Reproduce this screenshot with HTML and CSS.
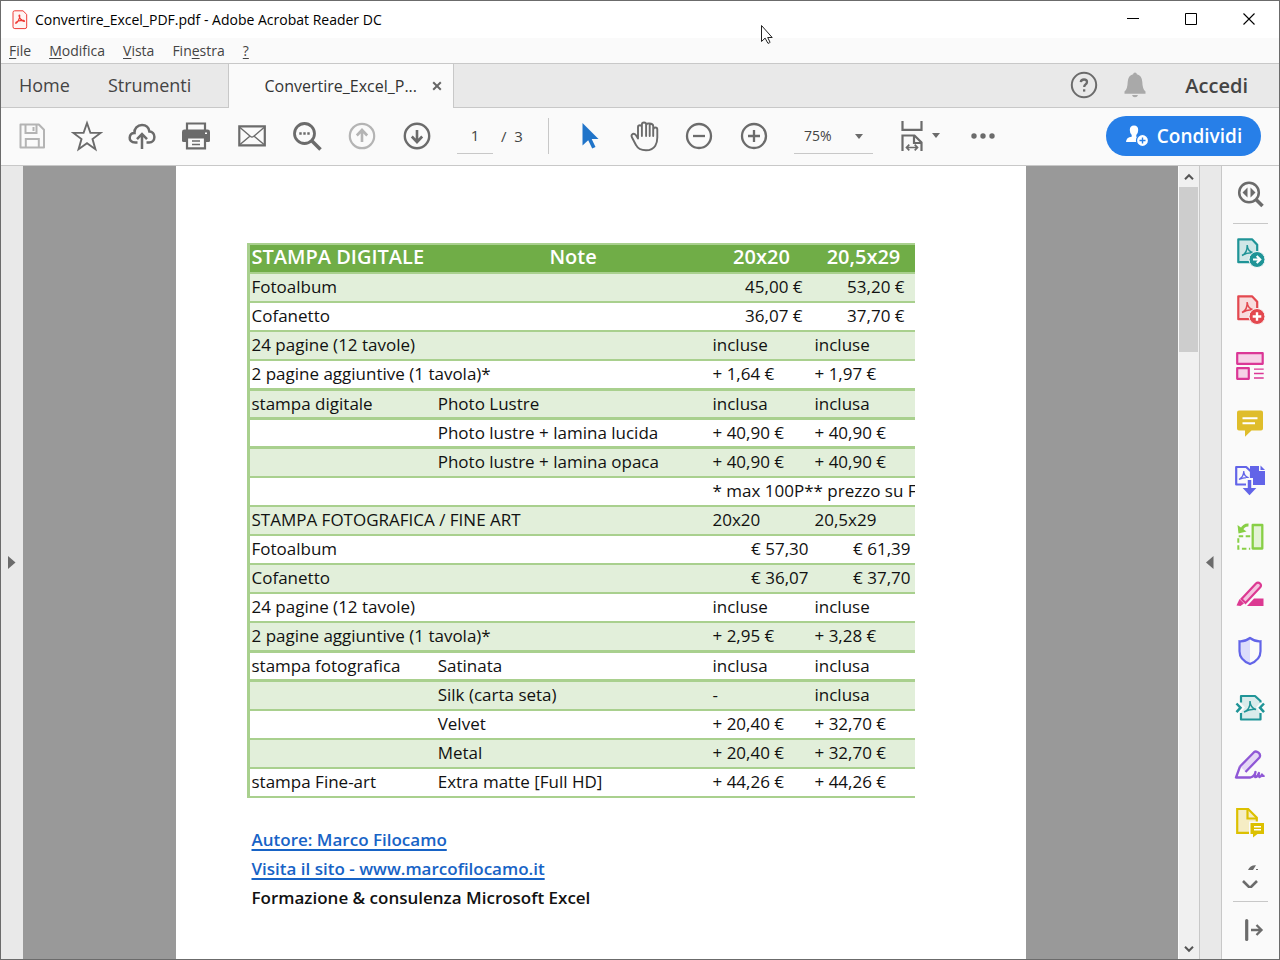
FILE: index.html
```html
<!DOCTYPE html>
<html lang="it">
<head>
<meta charset="utf-8">
<meta name="viewport" content="width=device-width, initial-scale=1">
<title>Convertire_Excel_PDF.pdf - Adobe Acrobat Reader DC</title>
<link rel="stylesheet" href="styles.css">
</head>
<body>
<div class="window">
  <header class="titlebar">
    <svg class="app-icon" width="16" height="20" viewBox="0 0 16 20" fill="none" stroke="#ee3a35"><path d="M1 2.5Q1 .8 2.7.8H11l3.7 3.6v12.4q0 1.8-1.8 1.8H2.800Q1 18.600 1 16.800Z" fill="#fff5f4"/><path d="M3.800 13.300C5 13.600 8.500 7.500 7.700 5.200 6.600 4 6.600 8 10 10.600c2.800 1.900 3.200.2 1.500-.2-2.500-.5-8.300 1-7.700 2.900Z" stroke-width="1.200"/></svg>
    <h1 class="title">Convertire_Excel_PDF.pdf - Adobe Acrobat Reader DC</h1>
    <div class="window-controls">
      <button class="control" aria-label="Riduci a icona"><svg width="14" height="14" viewBox="0 0 14 14"><path d="M1 6.500h12" stroke="#000"/></svg></button>
      <button class="control" aria-label="Ingrandisci"><svg width="14" height="14" viewBox="0 0 14 14"><path d="M1.500 1.500h11v11h-11z" fill="none" stroke="#000"/></svg></button>
      <button class="control" aria-label="Chiudi"><svg width="14" height="14" viewBox="0 0 14 14"><path d="M1.500 1.500l11 11m0-11l-11 11" stroke="#000" stroke-width="1.100"/></svg></button>
    </div>
  </header>
  <nav class="menubar">
    <button class="menu"><u>F</u>ile</button>
    <button class="menu"><u>M</u>odifica</button>
    <button class="menu"><u>V</u>ista</button>
    <button class="menu">Fin<u>e</u>stra</button>
    <button class="menu"><u>?</u></button>
  </nav>
  <div class="tabs">
    <div class="tabs-home">
      <button class="tab-link">Home</button>
      <button class="tab-link">Strumenti</button>
    </div>
    <div class="tab-active">
      <span>Convertire_Excel_P...</span>
      <button class="tab-close" aria-label="Chiudi scheda"><svg width="10" height="10" viewBox="0 0 10 10"><path d="M1.200 1.200l7.600 7.600m0-7.600L1.200 8.800" stroke="#666" stroke-width="2"/></svg></button>
    </div>
    <div class="tabs-end">
      <button class="icon-button" aria-label="Guida"><svg width="28" height="28" viewBox="0 0 28 28" fill="none" stroke="#6b6b6b"><circle cx="14" cy="14" r="12.200" stroke-width="2"/><path d="M10.800 11.200q.2-2.700 3.200-2.700 3 0 3 2.500 0 1.500-1.500 2.400-1.300.8-1.300 2.600" stroke-width="2.300"/><path d="M13 18.300h2.300v2.300H13z" fill="#6b6b6b" stroke="none"/></svg></button>
      <button class="icon-button" aria-label="Notifiche"><svg width="24" height="26" viewBox="0 0 24 26" fill="#a9a9a9"><path d="M12 .5q1.700 0 1.900 1.700Q19 3.500 19.300 10q.2 7.500 3.200 9.500v2.200h-21v-2.200q3-2 3.200-9.500Q5 3.500 10.100 2.200 10.300.5 12 .5ZM9 22.900h6q-.6 2.400-3 2.400T9 22.900Z"/></svg></button>
      <button class="sign-in">Accedi</button>
    </div>
  </div>
  <div class="toolbar">
    <div class="tool-group">
      <button class="tool" aria-label="Salva"><svg width="32" height="32" viewBox="0 0 32 32" fill="none" stroke="#b4b4b4" stroke-width="2"><path d="M4.500 4.500h18.300L28 9.800v17.700H4.500Z" stroke-linejoin="round"/><path d="M9.500 5v8h11V5M9.800 27v-8h13v8"/><path d="M17.500 7v4" /></svg></button>
      <button class="tool" aria-label="Preferiti"><svg width="32" height="32" viewBox="0 0 32 32" fill="none" stroke="#6b6b6b" stroke-width="1.900"><path d="M16 3l3.400 9.700 10.200.2-8.100 6.200 2.900 10.100L16 23.200l-8.400 6 2.900-10.100-8.100-6.200 10.200-.2Z"/></svg></button>
      <button class="tool" aria-label="Carica nel cloud"><svg width="32" height="32" viewBox="0 0 32 32" fill="none" stroke="#6b6b6b" stroke-width="2.500"><path d="M11.500 22.500H9.300C5 22.500 3.500 20 3.700 17.500c.2-2.500 2-4.500 4.800-4.500C8 8.500 11.500 5 16 5s6.800 2.900 7.400 6.500c3 .2 5 2.500 5 5.500s-2.100 5.500-5.200 5.500h-2.700"/><path d="M16 29V14m-5 5.200l5-5.200 5 5.200"/></svg></button>
      <button class="tool" aria-label="Stampa"><svg width="32" height="32" viewBox="0 0 32 32"><path d="M6 11V3.500h18V11" fill="none" stroke="#6b6b6b" stroke-width="2.200"/><path d="M3.500 9.500h23q2.500 0 2.500 2.300v9q0 1.200-1.500 1.200H2.500Q1 22 1 20.800v-9Q1 9.500 3.500 9.500Z" fill="#6b6b6b"/><path d="M6 17.500h18v10.800H6Z" fill="#fafafa" stroke="#6b6b6b" stroke-width="2.200"/><path d="M11 21h8m-8 3.500h8" stroke="#6b6b6b" stroke-width="1.300"/><path d="M24 13.200h2" stroke="#fff" stroke-width="1.600"/></svg></button>
      <button class="tool" aria-label="Invia per e-mail"><svg width="32" height="32" viewBox="0 0 32 32" fill="none" stroke="#6b6b6b"><path d="M3.300 6.300h25.500v19H3.300Z" stroke-width="2.200"/><path d="M4 7.500l10.500 9q1.500 1 3 0l10.500-9M4 24.500l9.500-8m5 0l9.500 8" stroke-width="1.400"/></svg></button>
      <button class="tool" aria-label="Cerca"><svg width="32" height="32" viewBox="0 0 32 32" fill="none" stroke="#6b6b6b"><circle cx="13.500" cy="13.500" r="10" stroke-width="2.800"/><path d="M21 21l8.500 8.500" stroke-width="3.500"/><path d="M8.300 13.500h2.400m1.600 0h2.400m1.600 0h2.400" stroke-width="2.400"/></svg></button>
      <button class="tool" aria-label="Pagina precedente"><svg width="32" height="32" viewBox="0 0 32 32" fill="none" stroke="#b4b4b4"><circle cx="16" cy="16" r="12.200" stroke-width="2.200"/><path d="M16 22V10m-5.200 5.500L16 10l5.200 5.500" stroke-width="2.600"/></svg></button>
      <button class="tool" aria-label="Pagina successiva"><svg width="32" height="32" viewBox="0 0 32 32" fill="none" stroke="#6b6b6b"><circle cx="16" cy="16" r="12.200" stroke-width="2.400"/><path d="M16 10v12m-5.200-5.500L16 22l5.200-5.500" stroke-width="2.600"/></svg></button>
    </div>
    <div class="page-number">
      <input class="page-input" type="text" value="1" aria-label="Pagina"><span>/&nbsp; 3</span>
    </div>
    <div class="tool-group tool-group-view">
      <button class="tool" aria-label="Selezione"><svg width="32" height="32" viewBox="0 0 32 32"><path d="M9.500 3v22.500l5.700-5.200 4 8.200 3.300-1.600-3.800-7.900h6.800Z" fill="#2074c9"/></svg></button>
      <button class="tool" aria-label="Mano"><svg width="32" height="32" viewBox="0 0 32 32" fill="none" stroke="#6b6b6b" stroke-width="1.900" stroke-linecap="round" stroke-linejoin="round"><path d="M10 18.500L8 15.300Q6.500 13.300 4.700 14q-1.800.9-.8 3.200l4.200 8Q10.600 30.300 18 30.300q6.500 0 9.300-4.600 2-3.300 2-8.200V9.600Q29.300 7.500 27.400 7.500T25.200 9.600V16M10 18.500V7.200Q10 5.300 11.900 5.300T13.900 7.200V16m0-8.800V4.600Q13.900 2.500 16 2.500t2.100 2.100V16M18.100 5.500Q18.300 3.500 20.100 3.500h1.300Q25.200 3.600 25.200 6v10M21.700 5v11"/></svg></button>
      <button class="tool" aria-label="Riduci"><svg width="32" height="32" viewBox="0 0 32 32" fill="none" stroke="#6b6b6b" stroke-width="2.300"><circle cx="16" cy="16" r="12"/><path d="M10 16h12"/></svg></button>
      <button class="tool" aria-label="Ingrandisci pagina"><svg width="32" height="32" viewBox="0 0 32 32" fill="none" stroke="#6b6b6b" stroke-width="2.300"><circle cx="16" cy="16" r="12"/><path d="M10 16h12M16 10v12"/></svg></button>
    </div>
    <div class="zoom">
      <select class="zoom-select" aria-label="Zoom"><option>75%</option></select>
      <svg class="zoom-arrow" width="8" height="5" viewBox="0 0 8 5"><path d="M0 0h8L4 5z" fill="#6b6b6b"/></svg>
    </div>
    <button class="fit" aria-label="Adatta alla larghezza"><svg width="24" height="32" viewBox="0 0 24 32" fill="none" stroke="#6b6b6b" stroke-width="2.200"><path d="M2.500 1v8.800h19V1"/><path d="M2.500 31V15.500h12l7 7V31M14 15.500v7.500h7.500"/><path d="M6.500 27.500h11M9.300 24.700l-2.800 2.800 2.800 2.800m5.400-5.600l2.800 2.800-2.800 2.800" stroke-width="1.700"/></svg><svg width="8" height="5" viewBox="0 0 8 5"><path d="M0 0h8L4 5z" fill="#6b6b6b"/></svg></button>
    <button class="more" aria-label="Altri strumenti"><svg width="24" height="6" viewBox="0 0 24 6" fill="#6b6b6b"><circle cx="3" cy="3" r="2.700"/><circle cx="12" cy="3" r="2.700"/><circle cx="21" cy="3" r="2.700"/></svg></button>
    <button class="share"><svg width="24" height="24" viewBox="0 0 24 24"><path d="M9 1.500q4.200 0 4.200 4.500 0 3-1.900 5.100v1.600q5.700 1.800 6.200 5.300H1q.2-4.800 5.700-5.300v-1.600Q4.800 9 4.800 6 4.800 1.500 9 1.500Z" fill="#fff"/><circle cx="17.500" cy="16.500" r="6" fill="#fff" stroke="#277fe8" stroke-width="1.200"/><path d="M14.500 16.500h6m-3-3v6" stroke="#277fe8" stroke-width="1.400"/></svg>Condividi</button>
  </div>

  <div class="content">
    <button class="rail rail-left" aria-label="Mostra riquadro di navigazione"><svg width="8" height="14" viewBox="0 0 8 14"><path d="M0 0l7.500 6.500L0 13z" fill="#6b6b6b"/></svg></button>
    <main class="viewer">
      <article class="page">
        <table class="prices">
          <colgroup><col class="col-item"><col class="col-note"><col class="col-price"><col class="col-price"></colgroup>
          <thead><tr><th class="left" scope="col">STAMPA DIGITALE</th><th scope="col">Note</th><th scope="col">20x20</th><th scope="col">20,5x29</th></tr></thead>
          <tbody>
            <tr><td colspan="2">Fotoalbum</td><td class="amount">45,00 €</td><td class="amount">53,20 €</td></tr>
            <tr><td colspan="2">Cofanetto</td><td class="amount">36,07 €</td><td class="amount">37,70 €</td></tr>
            <tr><td colspan="2">24 pagine (12 tavole)</td><td>incluse</td><td>incluse</td></tr>
            <tr class="thick tall"><td colspan="2">2 pagine aggiuntive (1 tavola)*</td><td>+ 1,64 €</td><td>+ 1,97 €</td></tr>
            <tr class="thick"><td>stampa digitale</td><td>Photo Lustre</td><td>inclusa</td><td>inclusa</td></tr>
            <tr class="thick"><td></td><td>Photo lustre + lamina lucida</td><td>+ 40,90 €</td><td>+ 40,90 €</td></tr>
            <tr><td></td><td>Photo lustre + lamina opaca</td><td>+ 40,90 €</td><td>+ 40,90 €</td></tr>
            <tr><td colspan="2"></td><td colspan="2">* max 100P** prezzo su F</td></tr>
            <tr><td colspan="2">STAMPA FOTOGRAFICA / FINE ART</td><td>20x20</td><td>20,5x29</td></tr>
            <tr><td colspan="2">Fotoalbum</td><td class="euro">€ 57,30</td><td class="euro">€ 61,39</td></tr>
            <tr><td colspan="2">Cofanetto</td><td class="euro">€ 36,07</td><td class="euro">€ 37,70</td></tr>
            <tr><td colspan="2">24 pagine (12 tavole)</td><td>incluse</td><td>incluse</td></tr>
            <tr class="thick tall"><td colspan="2">2 pagine aggiuntive (1 tavola)*</td><td>+ 2,95 €</td><td>+ 3,28 €</td></tr>
            <tr class="thick"><td>stampa fotografica</td><td>Satinata</td><td>inclusa</td><td>inclusa</td></tr>
            <tr><td></td><td>Silk (carta seta)</td><td>-</td><td>inclusa</td></tr>
            <tr><td></td><td>Velvet</td><td>+ 20,40 €</td><td>+ 32,70 €</td></tr>
            <tr><td></td><td>Metal</td><td>+ 20,40 €</td><td>+ 32,70 €</td></tr>
            <tr><td>stampa Fine-art</td><td>Extra matte [Full HD]</td><td>+ 44,26 €</td><td>+ 44,26 €</td></tr>
          </tbody>
        </table>
        <footer class="credits">
          <a href="#autore">Autore: Marco Filocamo</a>
          <a href="#sito">Visita il sito - www.marcofilocamo.it</a>
          <span>Formazione &amp; consulenza Microsoft Excel</span>
        </footer>
      </article>
    </main>
    <div class="scrollbar">
      <button class="scroll-button" aria-label="Scorri su"><svg width="10" height="8" viewBox="0 0 10 8"><path d="M1 6.200l4-4 4 4" fill="none" stroke="#555" stroke-width="2"/></svg></button>
      <div class="scroll-thumb"></div>
      <button class="scroll-button scroll-down" aria-label="Scorri giù"><svg width="10" height="8" viewBox="0 0 10 8"><path d="M1 1.800l4 4 4-4" fill="none" stroke="#555" stroke-width="2"/></svg></button>
    </div>
    <button class="rail rail-right" aria-label="Nascondi riquadro strumenti"><svg width="8" height="14" viewBox="0 0 8 14"><path d="M7.500 0L0 6.500 7.500 13z" fill="#6b6b6b"/></svg></button>
    <aside class="side">
      <button class="side-tool" aria-label="Cerca strumenti"><svg width="32" height="32" viewBox="0 0 32 32" fill="none" stroke="#6b6b6b"><circle cx="15" cy="14.500" r="9.800" stroke-width="2.500"/><path d="M22 21.500l6.500 6.500" stroke-width="3.500"/><path d="M13.500 9.500v10l-5-5zm3 0v10l5-5z" fill="#6b6b6b" stroke="none"/></svg></button>
      <hr class="side-line">
      <div class="side-list">
        <button class="side-tool" aria-label="Esporta PDF"><svg width="32" height="32" viewBox="0 0 32 32" fill="none" stroke="#1f9497"><path d="M4.300 3.300H18l5.200 5.400v17.500H4.300Z" fill="#cfe7e7" stroke-width="2.200" stroke-linejoin="round"/><path d="M8 19.500Q13.500 17 13.200 9q.3 6.500 6.500 8-6-.8-11.700 2.500Z" stroke-width="1.500"/><circle cx="23" cy="23.500" r="8" fill="#1f9497" stroke="#fafafa"/><path d="M19 23.500h7m-3.300-3.500l3.500 3.500-3.500 3.500" stroke="#fff" stroke-width="2.200"/></svg></button>
        <button class="side-tool" aria-label="Crea PDF"><svg width="32" height="32" viewBox="0 0 32 32" fill="none" stroke="#e3484f"><path d="M4.300 3.300H18l5.200 5.400v17.500H4.300Z" fill="#f8dcdd" stroke-width="2.200" stroke-linejoin="round"/><path d="M8 19.500Q13.500 17 13.200 9q.3 6.500 6.500 8-6-.8-11.700 2.500Z" stroke-width="1.500"/><circle cx="23" cy="23.500" r="8" fill="#e3484f" stroke="#fafafa"/><path d="M18.700 23.500h8.600M23 19.200v8.600" stroke="#fff" stroke-width="2.400"/></svg></button>
        <button class="side-tool" aria-label="Modifica PDF"><svg width="32" height="32" viewBox="0 0 32 32" fill="#f6d2e7" stroke="#db3796"><path d="M3.200 3.200h25.500v10.600H3.200Zm0 15h11.600v10.600H3.200Z" stroke-width="2.200" stroke-linejoin="round"/><path d="M20 19.200h9.700M20 23.500h9.700M20 28h9.700" stroke-width="1.300"/></svg></button>
        <button class="side-tool" aria-label="Commento"><svg width="32" height="32" viewBox="0 0 32 32"><path d="M5 3.500h22q2 0 2 2v16q0 2-2 2H17.500L11 29.800v-6.300H5q-2 0-2-2v-16q0-2 2-2Z" fill="#dfbd2b"/><path d="M8.500 11.200h15m-15 5H21" stroke="#fff" stroke-width="2"/></svg></button>
        <button class="side-tool" aria-label="Combina file"><svg width="32" height="32" viewBox="0 0 32 32" fill="none" stroke="#6264e8"><path d="M16 2h9v5h6v14H16Z" fill="#6264e8" stroke="none"/><path d="M26.500 1.500L31 6h-4.500Z" fill="#6264e8" stroke="none"/><path d="M2.200 3h10L17 7.500v13H2.200Z" fill="#fafafa" stroke-width="2.200" stroke-linejoin="round"/><path d="M5 15.500Q10 12.500 9.700 7q.1 5.300 5 6.800-4.500-.8-9.700 1.700Z" stroke-width="1.300"/><path d="M12 14h7v8h6L15.500 32 6 22h6Z" fill="#fafafa" stroke="none"/><path d="M15.500 16v10" stroke-width="3.500"/><path d="M8.700 24h13.600l-6.800 7.200Z" fill="#6264e8" stroke="none"/></svg></button>
        <button class="side-tool" aria-label="Organizza pagine"><svg width="32" height="32" viewBox="0 0 32 32" fill="none" stroke="#88cf46"><path d="M18.700 4h9.600v23.500h-9.600Z" fill="#e3f3d5" stroke-width="2.300" stroke-linejoin="round"/><path d="M16.200 15.200H4.300v12.500h11.900" stroke-width="2" stroke-dasharray="4.500 2.500"/><path d="M14.500 4Q9.500 3.800 7.500 9" stroke-width="2.800"/><path d="M3.500 4l1 8.500 8-2Z" fill="#88cf46" stroke="none"/></svg></button>
        <button class="side-tool" aria-label="Redigi"><svg width="32" height="32" viewBox="0 0 32 32"><path d="M2.500 27.500l3-6.500 4.500 4.500-3.500 2.500Z" fill="#dc3992"/><path d="M7.500 21L22 5.500q2-2 4 0t0 4L11.500 25Z" fill="#f5c3df" stroke="#dc3992" stroke-width="2.200"/><path d="M20 20.500h9.500V28H13Z" fill="#dc3992"/></svg></button>
        <button class="side-tool" aria-label="Proteggi"><svg width="32" height="32" viewBox="0 0 32 32"><path d="M16 3Q21 6.700 26.500 6.300v10Q26.500 25 16 29 5.500 25 5.500 16.300v-10Q11 6.700 16 3Z" fill="#fafafa"/><path d="M16 3v26Q5.500 25 5.500 16.300v-10Q11 6.700 16 3Z" fill="#dcdcfb"/><path d="M16 3Q21 6.700 26.500 6.300v10Q26.500 25 16 29 5.500 25 5.500 16.300v-10Q11 6.700 16 3Z" fill="none" stroke="#6264e8" stroke-width="2.200"/></svg></button>
        <button class="side-tool" aria-label="Comprimi PDF"><svg width="32" height="32" viewBox="0 0 32 32" fill="none" stroke="#1f9497"><path d="M7 11V4h14l5 5v2l-4 4.500L26 20v8H7v-8l4-4.500Z" fill="#d9ebeb" stroke="none"/><path d="M7 10.500V4h14l5.500 5v1.500M7 21v6.500h19.500V21" stroke-width="2.200" stroke-linejoin="round"/><path d="M10 20Q16.500 17.500 16 9q.3 6.800 6 8.500-6-.7-12 2.500Z" stroke-width="1.500"/><path d="M2.500 11.500L6.500 15.700l-4 4.500M30 11.500l-4 4.200 4 4.500" stroke-width="2.500"/></svg></button>
        <button class="side-tool" aria-label="Compila e firma"><svg width="32" height="32" viewBox="0 0 32 32" fill="none" stroke="#8f57d6" stroke-width="2.300"><path d="M6 17.500L20 3q2-1.700 4.500.5t1 4.800L11.500 22.500Z" fill="#e5d7f6" stroke="none"/><path d="M6 17.500L20 3.200q2-1.700 4.500.5t1 4.800L11.500 23M6 17.500l-4 11h14.500q4-1 5-5.500-1 3.500-.5 5 2.500.3 4-4-.8 3 .5 4 1.500-.3 2.500-2.500 0 2.300 2.500 1" stroke-linejoin="round"/></svg></button>
        <button class="side-tool" aria-label="Altri commenti"><svg width="32" height="32" viewBox="0 0 32 32"><path d="M3.200 3h11l8.600 8.600v15.200H3.200Z" fill="#f5edc4" stroke="#dcc000" stroke-width="2.200"/><path d="M13.500 3v9.500h9.300" fill="none" stroke="#dcc000" stroke-width="2.200"/><path d="M15 15.500h17v14h-8l-5 3v-3h-4Z" fill="#fafafa"/><path d="M16.500 17h13.500v11H23.500l-4.500 3.500v-3.500h-2.500Z" fill="#dcc000"/><path d="M20 20.800h7m-7 3h7" stroke="#fff" stroke-width="1.400"/></svg></button>
      </div>
      <button class="side-next" aria-label="Altri strumenti sotto"><svg width="16" height="24" viewBox="0 0 16 24" fill="#6b6b6b"><path d="M6 6Q8 1 14 1.300L11 6Zm8-1h2.500v1H14Z"/><path d="M1 17l7 7 7-7" fill="none" stroke="#6b6b6b" stroke-width="2.600"/></svg></button>
      <hr class="side-line">
      <button class="side-tool" aria-label="Comprimi riquadro"><svg width="32" height="32" viewBox="0 0 32 32" fill="none" stroke="#6b6b6b"><path d="M12.700 6.500v19" stroke-width="3.200" stroke-linecap="round"/><path d="M17 16h10m-4.500-5l5 5-5 5" stroke-width="2.300"/></svg></button>
    </aside>
  </div>
  <svg class="pointer" width="14" height="22" viewBox="0 0 14 22"><path d="M1.500 1.500v16l3.600-3.400 2.700 5q1.500.8 2.200-.9l-2.300-4.700h4.500Z" fill="#fff" stroke="#222"/></svg>
</div>
</body>
</html>
```
FILE: styles.css
```css
* { box-sizing: border-box; }
body { margin: 0; font-family: "Open Sans", "Noto Sans", sans-serif; color: #444; }
button { display: flex; align-items: center; justify-content: center; margin: 0; padding: 0; border: 0; background: none; color: inherit; font: inherit; }
svg { flex: none; display: block; }

.window { position: relative; display: flex; flex-direction: column; height: 100vh; border: 1px solid #6b6b6b; background: #fafafa; overflow: hidden; }

.titlebar { display: flex; align-items: center; height: 37px; flex: none; padding-left: 11px; background: #fff; }
.title { flex: 1; margin: 0 0 0 7px; font-size: 14px; font-weight: 400; color: #000; white-space: nowrap; }
.window-controls { display: flex; padding-right: 1px; }
.control { width: 58px; height: 36px; padding-bottom: 2px; }

.menubar { display: flex; align-items: center; gap: 18px; height: 25px; flex: none; padding-left: 8px; font-size: 14px; }
.menu u { text-underline-offset: 2px; }

.tabs { display: flex; height: 45px; flex: none; border-top: 1px solid #c8c8c8; background: #e9e9e9; font-size: 18px; }
.tabs-home { display: flex; align-items: center; gap: 38px; width: 228px; padding: 0 0 2px 18px; border-right: 1px solid #c8c8c8; border-bottom: 1px solid #c8c8c8; }
.tab-active { display: flex; align-items: center; justify-content: flex-end; gap: 15px; width: 224px; padding-right: 11px; background: #fafafa; font-size: 16px; color: #333; }
.tabs-end { display: flex; flex: 1; align-items: center; justify-content: flex-end; gap: 25px; padding: 0 31px 2px 0; border-left: 1px solid #c8c8c8; border-bottom: 1px solid #c8c8c8; }
.sign-in { margin-left: 13px; padding-top: 2px; font-size: 20px; font-weight: 600; }

.toolbar { display: flex; align-items: center; height: 58px; flex: none; padding: 0 18px 2px 3px; border-bottom: 1px solid #c8c8c8; font-size: 15px; }
.tool-group { display: flex; }
.tool { width: 55px; height: 40px; }
.page-number { display: flex; align-items: center; gap: 8px; margin-left: 13px; height: 36px; padding-right: 25px; border-right: 1px solid #c8c8c8; white-space: nowrap; }
.page-input { width: 36px; height: 36px; padding: 0; border: 0; border-bottom: 1px solid #c8c8c8; background: none; font: inherit; color: inherit; text-align: center; }
.tool-group-view { margin-left: 13px; }
.zoom { position: relative; width: 79px; margin-left: 12px; }
.zoom-select { width: 100%; height: 36px; padding: 0 0 0 10px; border: 0; border-bottom: 1px solid #c8c8c8; border-radius: 0; appearance: none; background: none; font: inherit; font-size: 14px; color: inherit; }
.zoom-arrow { position: absolute; right: 10px; top: 16px; pointer-events: none; }
.fit { gap: 8px; margin-left: 27px; }
.more { margin-left: 31px; }
.share { gap: 8px; width: 155px; height: 40px; margin-left: auto; border-radius: 20px; background: #277fe8; color: #fff; font-size: 19px; font-weight: 600; }

.content { display: flex; flex: 1; min-height: 0; }
.rail { width: 22px; flex: none; background: #e9e9e9; }
.rail-right { width: 23px; padding-right: 2px; border: solid #c8c8c8; border-width: 0 1px; }
.viewer { flex: 1; min-width: 0; overflow: hidden; background: #999; border-right: 1px solid #fafafa; }
.page { max-width: 850px; height: 100%; margin: 0 auto; padding: 77px 111px 0 71px; background: #fff; color: #111; }

.prices { width: 100%; table-layout: fixed; border-spacing: 0; border-top: 2px solid #a9d08e; border-left: 3px solid #a9d08e; font-size: 17px; line-height: 24px; }
.col-item { width: 28%; }
.col-price { width: 102px; }
.prices th, .prices td { height: 29px; padding: 0 2px 2px; border-bottom: 2px solid #a9d08e; white-space: nowrap; overflow: hidden; text-align: left; }
.prices th { padding-bottom: 3px; background: #70ad47; color: #fff; font-size: 20px; font-weight: 600; text-align: center; }
.prices th.left { text-align: left; }
.prices tbody tr:nth-child(odd) { background: #e2efda; }
.prices .thick td { padding-bottom: 1px; border-bottom-width: 3px; }
.prices .tall td { height: 30px; padding-bottom: 2px; }
.prices td.amount { padding-right: 10px; text-align: right; }
.prices td.euro { padding-right: 4px; text-align: right; }

.credits { display: flex; flex-direction: column; align-items: flex-start; gap: 5px; margin-top: 30px; padding-left: 5px; font-size: 17px; font-weight: 600; line-height: 24px; }
.credits a { color: #1763c6; text-decoration-thickness: 2px; text-underline-offset: 3px; }

.scrollbar { display: flex; flex-direction: column; width: 20px; flex: none; padding-right: 1px; background: #f0f0f0; }
.scroll-button { height: 21px; flex: none; }
.scroll-thumb { height: 165px; background: #cdcdcd; }
.scroll-down { margin-top: auto; }

.side { display: flex; flex-direction: column; width: 57px; flex: none; }
.side-tool { width: 100%; height: 57px; flex: none; padding: 0 2px 2px 0; }
.side-line { width: 35px; height: 1px; flex: none; margin: 0 auto; border: 0; background: #c8c8c8; }
.side-list { flex: 0 1 auto; min-height: 0; overflow: hidden; }
.side-next { flex: 1; min-height: 24px; padding-right: 2px; }

.pointer { position: absolute; left: 759px; top: 23px; }
```
